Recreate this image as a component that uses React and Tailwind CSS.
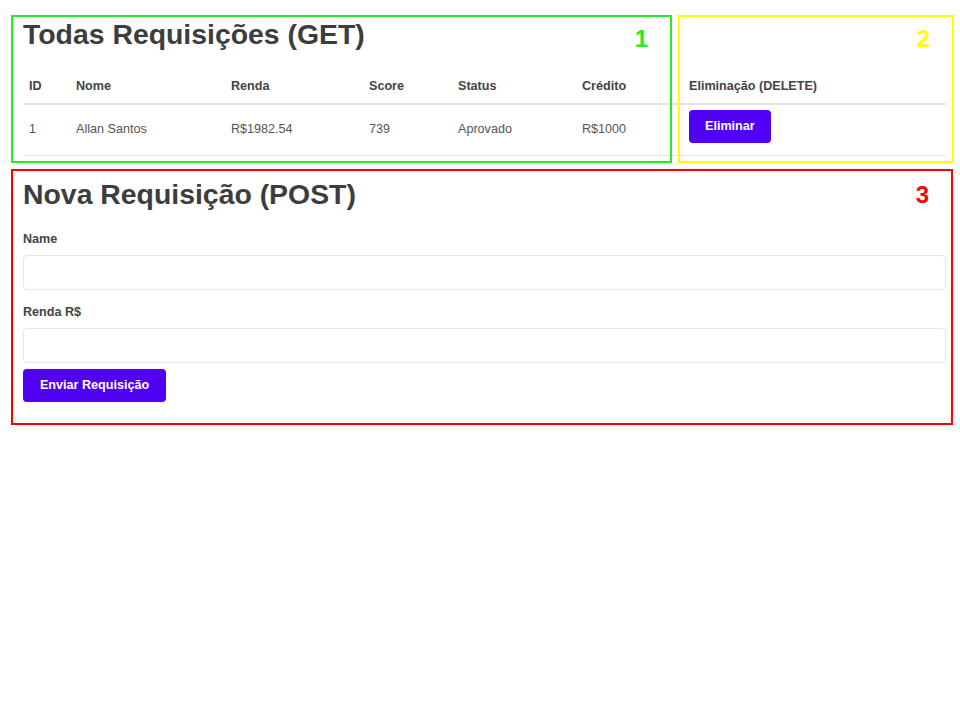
import React from "react"

const rows = [
  { id: 1, nome: "Allan Santos", renda: "R$1982.54", score: 739, status: "Aprovado", credito: "R$1000" },
]

export default function App() {
  return (
    <div className="relative min-h-[720px] bg-white pl-[23px] pr-[14px] text-[#444] font-['Liberation_Sans',Arial,sans-serif]">
      {/* Listagem */}
      <h1 className="pt-[17px] text-[28.4px] font-bold leading-[34px] text-[#3d3d3d]">
        Todas Requisições (GET)
      </h1>
      <table className="mt-[19px] w-full border-collapse text-[12.6px]">
        <thead>
          <tr className="h-[34px] border-b-2 border-[#e2e2e2] text-left text-[#444]">
            <th className="w-[47px] pl-[6px] font-bold">ID</th>
            <th className="w-[155px] pl-[6px] font-bold">Nome</th>
            <th className="w-[138px] pl-[6px] font-bold">Renda</th>
            <th className="w-[89px] pl-[6px] font-bold">Score</th>
            <th className="w-[124px] pl-[6px] font-bold">Status</th>
            <th className="w-[107px] pl-[6px] font-bold">Crédito</th>
            <th className="pl-[6px] font-bold">Eliminação (DELETE)</th>
          </tr>
        </thead>
        <tbody>
          {rows.map((r) => (
            <tr key={r.id} className="h-[51px] border-b border-[#e8e8e8] text-[#555]">
              <td className="pl-[6px]">{r.id}</td>
              <td className="pl-[6px]">{r.nome}</td>
              <td className="pl-[6px]">{r.renda}</td>
              <td className="pl-[6px]">{r.score}</td>
              <td className="pl-[6px]">{r.status}</td>
              <td className="pl-[6px]">{r.credito}</td>
              <td className="pl-[6px] pb-[7px]">
                <button className="h-[33px] rounded-[4px] bg-[#5000f2] px-[16px] text-[12.6px] font-bold text-white">
                  Eliminar
                </button>
              </td>
            </tr>
          ))}
        </tbody>
      </table>

      {/* Formulario */}
      <h1 className="mt-[21px] text-[28.4px] font-bold leading-[34px] text-[#3d3d3d]">
        Nova Requisição (POST)
      </h1>
      <form className="mt-[20px] flex flex-col">
        <label className="text-[12.6px] font-bold leading-[16px] text-[#444]">Name</label>
        <input className="mt-[8px] h-[35px] rounded-[4px] border border-[#e6e6e6] px-3 outline-none" />
        <label className="mt-[14px] text-[12.6px] font-bold leading-[16px] text-[#444]">Renda R$</label>
        <input className="mt-[8px] h-[35px] rounded-[4px] border border-[#e6e6e6] px-3 outline-none" />
        <button
          type="button"
          className="mt-[6px] h-[33px] w-[143px] rounded-[4px] bg-[#5000f2] text-[12.6px] font-bold text-white"
        >
          Enviar Requisição
        </button>
      </form>

      {/* marcações */}
      <div className="pointer-events-none absolute left-[11px] top-[15px] h-[148px] w-[661px] border-2 border-[#22ee22]">
        <span className="absolute right-[22px] top-[10px] text-[24px] font-bold leading-none text-[#22ee22]">1</span>
      </div>
      <div className="pointer-events-none absolute left-[678px] top-[15px] h-[148px] w-[276px] border-2 border-[#ffff00]">
        <span className="absolute right-[22px] top-[10px] text-[24px] font-bold leading-none text-[#ffff00]">2</span>
      </div>
      <div className="pointer-events-none absolute left-[11px] top-[169px] h-[256px] w-[942px] border-2 border-[#ff0000]">
        <span className="absolute right-[22px] top-[12px] text-[24px] font-bold leading-none text-[#ff0000]">3</span>
      </div>
    </div>
  )
}
